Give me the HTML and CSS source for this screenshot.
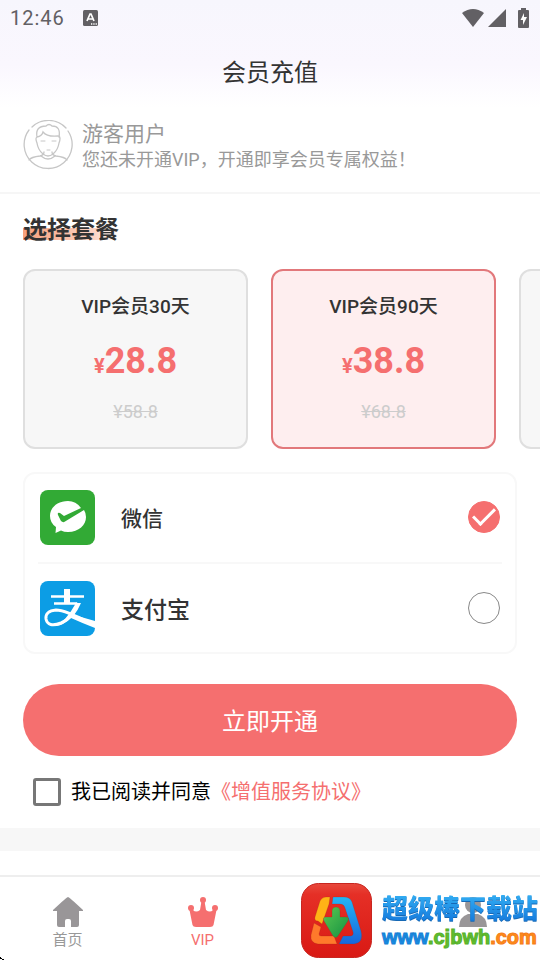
FILE: index.html
```html
<!DOCTYPE html>
<html lang="zh-CN">
<head>
<meta charset="utf-8">
<meta name="viewport" content="width=device-width, initial-scale=1">
<title>会员充值</title>
<link rel="stylesheet" href="styles.css">
</head>
<body>
<header class="top">
  <div class="status">
    <span class="clock">12:46</span>
    <svg class="status-app" viewBox="0 0 15 16" aria-hidden="true"><rect width="15" height="16" rx="1.5" fill="#626064"/><path d="M4 11 7 4h1l3 7M5.200 9h4.600" fill="none" stroke="#fff" stroke-width="1.700"/><path d="M8 14h1.300m1 0h1.300m1 0h1.300" stroke="#fff" stroke-width="1.300"/></svg>
    <svg class="status-net" viewBox="0 0 68 20" aria-hidden="true"><g fill="#626064"><path d="M0 5Q11-3 22 5L11 19Z"/><path d="M44 1V19H26Z"/><path d="M59 2V0h5v2h2q1 0 1 1v16q0 1-1 1h-9q-1 0-1-1V3q0-1 1-1Z"/></g><path d="M62 5l-3.500 7h2.500v5l4-8h-3Z" fill="#fff"/></svg>
  </div>
  <h1 class="title">会员充值</h1>
</header>
<main class="content">
  <section class="user">
    <svg class="avatar" viewBox="0 0 50 50" fill="none" stroke="#c6c6c6" stroke-width="1.300" stroke-linecap="round" aria-hidden="true">
      <path d="M6 10A24 24 0 1 0 45 11M9 7A24 24 0 0 1 43 8"/>
      <path d="M6 40Q8 37 17 36Q21 35 21 32M44 40Q42 37 33 36Q29 35 29 32M18 36Q25 42 32 36"/>
      <path d="M14 17Q12 18 14 23Q15 30 20 34Q25 38 30 34Q35 30 36 23Q38 18 36 16M14 17Q12 6 23 6Q26 3 29 6Q38 6 36 17M14 17Q19 16 20 12Q24 17 35 16"/>
      <path d="M18 21h4m7 0h4M24 30h3" stroke-width="1"/>
    </svg>
    <div class="user-text">
      <p class="name">游客用户</p>
      <p class="hint">您还未开通VIP，开通即享会员专属权益！</p>
    </div>
  </section>
  <h2 class="heading"><span>选择套餐</span></h2>
  <div class="plans">
    <button class="plan" type="button" aria-pressed="false">
      <span class="plan-name">VIP会员30天</span>
      <span class="price"><small>¥</small>28.8</span>
      <s class="was">¥58.8</s>
    </button>
    <button class="plan selected" type="button" aria-pressed="true">
      <span class="plan-name">VIP会员90天</span>
      <span class="price"><small>¥</small>38.8</span>
      <s class="was">¥68.8</s>
    </button>
    <div class="plan"></div>
  </div>
  <div class="payments">
    <label class="payment">
      <svg class="pay-icon" viewBox="0 0 55 55" aria-hidden="true"><rect width="55" height="55" rx="8" fill="#32aa35"/><path d="M28 11C17 11 10 18 10 26Q10 33 16 37L15.500 43L21 40.500Q24 42 28 42C39 42 46 35 46 27Q46 23 44 20L25 31.500Q23 33 21 31L18 25Q17 22 20 23L24 26L41 18Q36 11 28 11Z" fill="#fff"/></svg>
      <span class="wechat">微信</span>
      <input type="radio" name="payment" checked>
    </label>
    <label class="payment">
      <svg class="pay-icon" viewBox="0 0 55 55" aria-hidden="true"><rect width="55" height="55" rx="8" fill="#0c9de5"/><path d="M11 15.500H44M14 22.500H37" fill="none" stroke="#fff" stroke-width="2.500"/><path d="M24 8h6v14h-6Z" fill="#fff"/><path d="M38 22Q33 37 21 42Q8 47 6 38Q5 30 16 29Q25 29 50 42" fill="none" stroke="#fff" stroke-width="3"/><path d="M36 22h5Q38 29 34 34L55 40V47Q42 42 31 37Q24 44 16 45Q26 40 36 22Z" fill="#fff"/></svg>
      <span class="alipay">支付宝</span>
      <input type="radio" name="payment">
    </label>
  </div>
  <button class="submit" type="button">立即开通</button>
  <div class="agreement">
    <input type="checkbox" id="agree">
    <label for="agree">我已阅读并同意</label><a href="#">《增值服务协议》</a>
  </div>
  <div class="band"></div>
</main>
<nav class="tabs">
  <a class="tab" href="#">
    <svg viewBox="0 0 30 30" aria-hidden="true"><path d="M15 0Q16 0 30 13Q31 14 29 14H26V28Q26 30 24 30H18V24Q18 22 16 22H14Q12 22 12 24V30H6Q4 30 4 28V14H1Q-1 14 0 13Q14 0 15 0Z" fill="#999698"/></svg>
    <span>首页</span>
  </a>
  <a class="tab active" href="#">
    <svg viewBox="0 0 30 30" fill="#f56f6f" aria-hidden="true"><circle cx="15" cy="3" r="3"/><circle cx="3" cy="11" r="3"/><circle cx="27" cy="11" r="3"/><path d="M13.500 4h3L18 13Q22 16 25 13L28.500 13L25.500 28Q25 30 22 30H8Q5 30 4.500 28L1.500 13L5 13Q8 16 12 13Z"/></svg>
    <span>VIP</span>
  </a>
  <a class="tab mine" href="#" aria-label="我的">
    <svg viewBox="0 0 30 30" fill="#999698" aria-hidden="true"><circle cx="15" cy="8" r="8"/><path d="M1 30Q1 20 10 17H20Q29 20 29 30Z"/></svg>
  </a>
  <div class="brand">
    <svg class="brand-logo" viewBox="0 0 71 75" aria-hidden="true">
      <defs>
        <linearGradient id="red" x2="0" y2="1"><stop stop-color="#e8493c"/><stop offset=".15" stop-color="#e52f26"/><stop offset="1" stop-color="#d91914"/></linearGradient>
        <linearGradient id="blue" x2="0" y2="1"><stop stop-color="#25b6f5"/><stop offset="1" stop-color="#1767dc"/></linearGradient>
        <linearGradient id="green" x2="1" y2="1"><stop stop-color="#5bc851"/><stop offset="1" stop-color="#149142"/></linearGradient>
      </defs>
      <rect x=".5" y=".5" width="70" height="74" rx="17" fill="url(#red)" stroke="#c72620"/>
      <g stroke="#8f2019" stroke-opacity=".35" stroke-width=".6">
        <path d="M29 14H25Q21 14 19 18L14 34Q13 38 17 38L21 41L28 21Z" fill="#ffb316"/>
        <path d="M13 40L20 44L18 51Q18 53 20 53H33L36 61H17Q9 60 10 52Z" fill="#ff792b"/>
        <path d="M32 14H43Q49 14 51 19L60 48Q63 60 53 61H38L42 53H50Q53 52 52 49L44 25Q43 21 39 21H31Z" fill="url(#blue)"/>
        <path d="M31 28Q31 24 35 24Q39 24 39 28V34H45Q49 34 47 38L37 53Q35 56 32 53L23 38Q21 34 25 34H31Z" fill="url(#green)"/>
      </g>
    </svg>
    <div class="brand-text">
      <strong class="brand-name">超级棒下载站</strong>
      <span class="brand-url"><span class="url-blue">www</span><span class="url-green">.cjbwh</span><span class="url-orange">.com</span></span>
    </div>
  </div>
  <svg class="corner" viewBox="0 0 4 4" aria-hidden="true"><path d="M0 1h1v1h1v1h2v1H2V3H0Z"/></svg>
</nav>
</body>
</html>
```
FILE: styles.css
```css
* { box-sizing: border-box; }

body {
  margin: 0;
  min-height: 100vh;
  display: flex;
  flex-direction: column;
  background: #fff;
  color: #333;
  font-family: Roboto, "Noto Sans CJK SC", sans-serif;
}

h1, h2, p { margin: 0; }
button, input { font: inherit; color: inherit; margin: 0; }
a { color: inherit; text-decoration: none; }

.top {
  height: 108px;
  background: linear-gradient(#f7f6fd, #faf7fe 60%, #fff);
}

.status {
  display: flex;
  align-items: center;
  height: 36px;
  padding: 0 10px;
  color: #626064;
}

.clock { width: 53px; font-size: 20px; letter-spacing: 1px; }
.status-app { width: 15px; height: 16px; margin-left: 20px; }
.status-net { width: 68px; height: 20px; margin-left: auto; }

.title {
  text-align: center;
  font-size: 24px;
  font-weight: 400;
  line-height: 74px;
}

.content { flex: 1; }

.user {
  display: flex;
  align-items: center;
  gap: 9px;
  height: 86px;
  padding: 2px 23px 12px;
  border-bottom: 2px solid #f6f6f6;
  color: #999;
}

.avatar { width: 50px; height: 50px; flex: none; }
.user-text { padding-top: 2px; }
.name { font-size: 21px; line-height: 28px; }
.hint { font-size: 18px; line-height: 24px; white-space: nowrap; }

.heading {
  padding: 0 23px;
  font-size: 24px;
  font-weight: 700;
  line-height: 28px;
  margin: 22px 0 25px;
}

.heading span {
  display: inline-block;
  height: 28px;
  background: linear-gradient(90deg, #f7a07c, #fcd5c6 75%, #fff) 0 12px / 100% 12px no-repeat;
}

.plans {
  display: flex;
  gap: 23px;
  padding-left: 23px;
  overflow: hidden;
}

.plan {
  flex: none;
  display: flex;
  flex-direction: column;
  align-items: center;
  width: 225px;
  height: 180px;
  padding: 21px 0;
  border: 2px solid #dfdfdf;
  border-radius: 12px;
  background: #f7f7f7;
}

.plan.selected { border-color: #e2787b; background: #feeeef; }
.plan-name { font-size: 19px; font-weight: 500; line-height: 30px; }
.price { margin-top: 15px; font-size: 36px; font-weight: 700; line-height: 48px; color: #f56f6f; }
.price small { font-size: 20px; }
.was { margin-top: 10px; font-size: 18px; line-height: 24px; color: #ccc; }

.payments {
  margin: 23px 23px 30px;
  padding: 0 13px;
  border: 2px solid #f8f8f8;
  border-radius: 12px;
}

.payment {
  display: flex;
  align-items: center;
  height: 88px;
  padding: 0 2px 2px;
  font-weight: 500;
}

.payment + .payment { height: 90px; padding-bottom: 0; border-top: 2px solid #f8f8f8; }
.pay-icon { width: 55px; height: 55px; margin-right: 26px; }
.wechat { font-size: 21px; }
.alipay { font-size: 23px; }

.payment input {
  appearance: none;
  width: 32px;
  height: 32px;
  margin-left: auto;
  border: 1px solid #888;
  border-radius: 50%;
  display: grid;
  place-items: center;
}

.payment input:checked { border-color: #f56f6f; background: #f56f6f; }

.payment input:checked::before {
  content: "";
  width: 19px;
  height: 9px;
  border: solid #fff;
  border-width: 0 0 3px 3px;
  transform: translateY(-3px) rotate(-45deg);
}

.submit {
  display: block;
  width: calc(100% - 46px);
  height: 72px;
  margin: 0 23px;
  padding: 0 0 2px;
  border: 0;
  border-radius: 36px;
  background: #f56f6f;
  color: #fff;
  font-size: 24px;
}

.agreement {
  display: flex;
  align-items: center;
  height: 72px;
  padding-left: 33px;
  font-size: 20px;
  line-height: 30px;
  color: #000;
}

.agreement input {
  appearance: none;
  width: 28px;
  height: 28px;
  margin-right: 10px;
  border: 3px solid #777;
  border-radius: 3px;
}

.agreement a { color: #f56f6f; }
.band { height: 23px; background: #f7f7f7; }

.tabs {
  position: relative;
  display: grid;
  grid-template-columns: repeat(4, 1fr);
  height: 85px;
  border-top: 2px solid #eee;
  background: #fff;
}

.tab {
  display: flex;
  flex-direction: column;
  align-items: center;
  padding-top: 20px;
  color: #999;
  font-size: 15px;
  line-height: 26px;
}

.tab svg { width: 30px; height: 30px; }
.tab.active { color: #f56f6f; }
.mine { grid-column: 4; }

.brand {
  position: absolute;
  right: 2px;
  bottom: 2px;
  display: flex;
  align-items: center;
  gap: 10px;
}

.brand-logo { width: 71px; height: 75px; }
.brand-text { display: flex; flex-direction: column; white-space: nowrap; }

.brand-name {
  font: 900 26px/32px "Noto Sans CJK SC", sans-serif;
  background: linear-gradient(#36b4f5, #1478dc);
  background-clip: text;
  color: transparent;
  filter: drop-shadow(0 1px 0 #1668b4);
}

.brand-url { font: 700 20px/28px "Liberation Sans", sans-serif; }
.url-blue { color: #168be3; -webkit-text-stroke: 1px #1680d4; }
.url-green { color: #62be2d; -webkit-text-stroke: 1px #55b02a; }
.url-orange { color: #ff8c1b; -webkit-text-stroke: 1px #f57c16; }

.corner { position: absolute; left: 0; bottom: 0; width: 4px; height: 4px; }
```
